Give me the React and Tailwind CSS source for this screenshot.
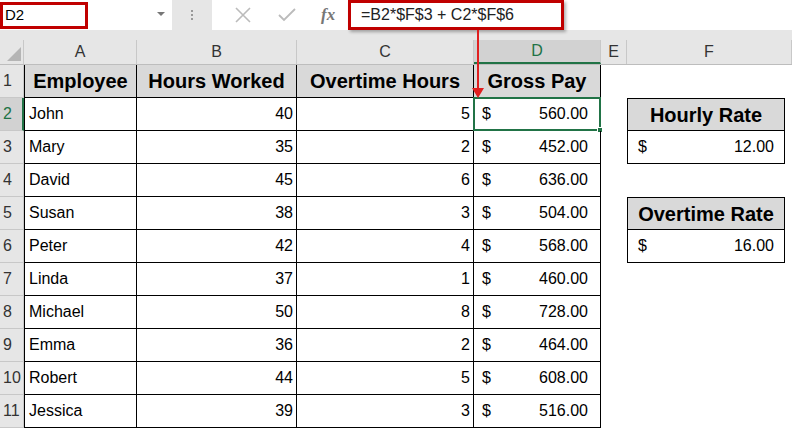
export default function App() {
  const W = [24, 113, 160, 177, 127, 26, 165];
  const data = [
    ["John", 40, 5, "560.00"], ["Mary", 35, 2, "452.00"], ["David", 45, 6, "636.00"],
    ["Susan", 38, 3, "504.00"], ["Peter", 42, 4, "568.00"], ["Linda", 37, 1, "460.00"],
    ["Michael", 50, 8, "728.00"], ["Emma", 36, 2, "464.00"], ["Robert", 44, 5, "608.00"],
    ["Jessica", 39, 3, "516.00"],
  ];
  const fRight = (r) => {
    if (r === 2) return ["h", "Hourly Rate"];
    if (r === 3) return ["v", "12.00"];
    if (r === 5) return ["h", "Overtime Rate"];
    if (r === 6) return ["v", "16.00"];
    return null;
  };
  const F = (r) => {
    const f = fRight(r);
    if (!f) return <div style={{ width: W[6] }} />;
    if (f[0] === "h")
      return <div className="h-full border border-black bg-[#d9d9d9] flex items-center justify-center font-bold text-[20px] mr-[7px]" style={{ width: W[6] - 7 }}>{f[1]}</div>;
    return <div className="h-full border-x border-b border-black flex items-center justify-between px-[10px] text-[16px] mr-[7px]" style={{ width: W[6] - 7 }}><span>$</span><span>{f[1]}</span></div>;
  };
  return (
    <div className="w-[792px] h-[431px] bg-white overflow-hidden relative" style={{ fontFamily: '"Liberation Sans", Arial, sans-serif' }}>
      {/* formula bar */}
      <div className="h-[40px] bg-[#e6e6e6] flex items-start">
        <div className="w-[172px] h-[30px] bg-white flex items-center relative">
          <div className="w-[88px] h-[27px] border-[3px] border-[#c00000] flex items-center pl-[2px] text-[15px]">D2</div>
          <span className="absolute left-[157px] top-[12px] w-0 h-0 border-x-[4px] border-x-transparent border-t-[4px] border-t-[#777]" />
        </div>
        <div className="w-[40px] h-[30px] flex flex-col items-center justify-center gap-[2px]">
          <span className="w-[2px] h-[2px] bg-[#999]" /><span className="w-[2px] h-[2px] bg-[#999]" /><span className="w-[2px] h-[2px] bg-[#999]" />
        </div>
        <div className="w-[136px] h-[30px] bg-white flex items-center">
          <svg className="ml-[23px]" width="16" height="16" viewBox="0 0 16 16"><path d="M1 1L15 15M15 1L1 15" stroke="#bbb" strokeWidth="1.6" /></svg>
          <svg className="ml-[27px]" width="18" height="14" viewBox="0 0 18 14"><path d="M1 7L6 12L17 1" stroke="#bbb" strokeWidth="1.8" fill="none" /></svg>
          <span className="ml-[25px] italic font-bold text-[#777] text-[17px]" style={{ fontFamily: '"Liberation Serif", serif' }}>fx</span>
        </div>
        <div className="flex-1 h-[30px] bg-white">
          <div className="w-[216px] h-[30px] border-[3px] border-[#c00000] flex items-center pl-[10px] text-[16px] text-[#222] shadow-[2px_2px_3px_rgba(0,0,0,0.3)]">=B2*$F$3 + C2*$F$6</div>
        </div>
      </div>
      {/* column headers */}
      <div className="flex h-[25px] bg-[#e6e6e6] border-b border-[#bdbdbd] text-[16px] text-[#333]">
        {["", "A", "B", "C", "D", "E", "F"].map((c, i) => (
          <div key={i} className={`h-full flex items-center justify-center border-r border-[#c8c8c8] ${i === 4 ? "bg-[#d2d2d2] text-[#217346] border-b-2 border-b-[#217346]" : ""}`} style={{ width: W[i] }}>
            {i === 0 ? <svg width="18" height="18" className="ml-[4px] mt-[4px]"><path d="M16 2V16H2Z" fill="#b5b5b5" /></svg> : c}
          </div>
        ))}
      </div>
      {/* row 1 */}
      <div className="flex h-[33px]">
        <div className="bg-[#e6e6e6] border-r border-b border-[#c8c8c8] flex items-center pl-[3px] text-[16px] text-[#333]" style={{ width: W[0] }}>1</div>
        {["Employee", "Hours Worked", "Overtime Hours", "Gross Pay"].map((h, i) => (
          <div key={i} className={`bg-[#d9d9d9] border-r border-b border-black ${i === 0 ? "border-l" : ""} flex items-center justify-center font-bold text-[20px]`} style={{ width: W[i + 1] }}>{h}</div>
        ))}
        <div style={{ width: W[5] }} />
        <div style={{ width: W[6] }} />
      </div>
      {data.map((d, k) => {
        const r = k + 2;
        return (
          <div key={r} className="flex h-[33px] text-[16px]">
            <div className={`border-r border-b border-[#c8c8c8] flex items-center pl-[3px] ${r === 2 ? "bg-[#d2d2d2] text-[#217346] border-r-2 border-r-[#217346]" : "bg-[#e6e6e6] text-[#333]"}`} style={{ width: W[0] }}>{r}</div>
            <div className="border-l border-r border-b border-black flex items-center pl-[4px]" style={{ width: W[1] }}>{d[0]}</div>
            <div className="border-r border-b border-black flex items-center justify-end pr-[3px]" style={{ width: W[2] }}>{d[1]}</div>
            <div className="border-r border-b border-black flex items-center justify-end pr-[3px]" style={{ width: W[3] }}>{d[2]}</div>
            <div className={`relative border-r border-b border-black flex items-center justify-between pl-[8px] pr-[12px]`} style={{ width: W[4] }}>
              {r === 2 && <div className="absolute -left-[1px] -top-[1px] -right-[1px] -bottom-[1px] border-2 border-[#217346]"><span className="absolute -right-[4px] -bottom-[4px] w-[6px] h-[6px] bg-[#217346] border border-white" /></div>}
              <span>$</span><span>{d[3]}</span>
            </div>
            <div style={{ width: W[5] }} />
            {F(r)}
          </div>
        );
      })}
      {/* arrow */}
      <div className="absolute left-[477px] top-[30px] w-[2px] h-[60px] bg-[#e02020]" />
      <div className="absolute left-[472px] top-[88px] w-0 h-0 border-x-[6px] border-x-transparent border-t-[10px] border-t-[#e02020]" />
    </div>
  );
}
